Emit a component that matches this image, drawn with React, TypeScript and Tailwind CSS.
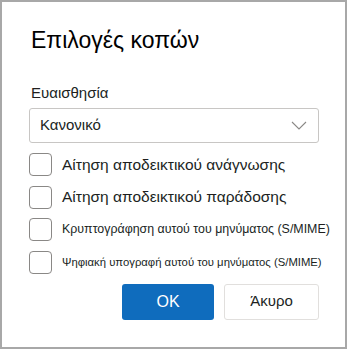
import React from "react";

function Check({ label, size }: { label: string; size: "lg" | "md" | "sm" }) {
  const cls =
    size === "lg"
      ? "ml-[10px] text-[15.5px] text-[#201f1e] whitespace-nowrap"
      : size === "md"
      ? "ml-[10px] text-[12.4px] text-[#201f1e] whitespace-nowrap"
      : "ml-[10px] text-[11.3px] text-[#201f1e] whitespace-nowrap";
  return (
    <div className="flex items-center h-[23px]">
      <div className="w-[23px] h-[23px] rounded-[4px] border border-[#8a8886] bg-white shrink-0" />
      <span className={cls}>{label}</span>
    </div>
  );
}

export default function App() {
  return (
    <div
      className="w-[347px] h-[349px] bg-white border-2 border-[#a8a8a8] box-border overflow-hidden"
      style={{ fontFamily: '"Liberation Sans", Arial, sans-serif' }}
    >
      <div className="pl-[27px] pr-[26px] pt-[22px] flex flex-col">
        <div className="text-[23px] leading-[32px] text-black pl-[2px]">Επιλογές κοπών</div>
        <div className="mt-[27px] text-[15px] leading-[20px] text-[#201f1e] pl-[2px]">Ευαισθησία</div>
        <div className="mt-[5px] h-[35px] border border-[#c8c6c4] rounded-[3px] flex items-center justify-between pl-[10px] pr-[11px]">
          <span className="text-[15px] text-[#201f1e]">Κανονικό</span>
          <svg width="16" height="9" viewBox="0 0 16 9" fill="none">
            <path d="M1 1l7 7 7-7" stroke="#8a8886" strokeWidth="1.1" />
          </svg>
        </div>
        <div className="mt-[10px] flex flex-col gap-[9.5px]">
          <Check label="Αίτηση αποδεικτικού ανάγνωσης" size="lg" />
          <Check label="Αίτηση αποδεικτικού παράδοσης" size="lg" />
          <Check label="Κρυπτογράφηση αυτού του μηνύματος (S/MIME)" size="md" />
          <Check label="Ψηφιακή υπογραφή αυτού του μηνύματος (S/MIME)" size="sm" />
        </div>
        <div className="mt-[10px] flex justify-end gap-[10px]">
          <button className="w-[92px] h-[36px] rounded-[3px] bg-[#0f6cbd] text-white text-[16px]">OK</button>
          <button className="w-[95px] h-[36px] rounded-[3px] bg-white border border-[#e1dfdd] text-[#201f1e] text-[15px]">Άκυρο</button>
        </div>
      </div>
    </div>
  );
}
